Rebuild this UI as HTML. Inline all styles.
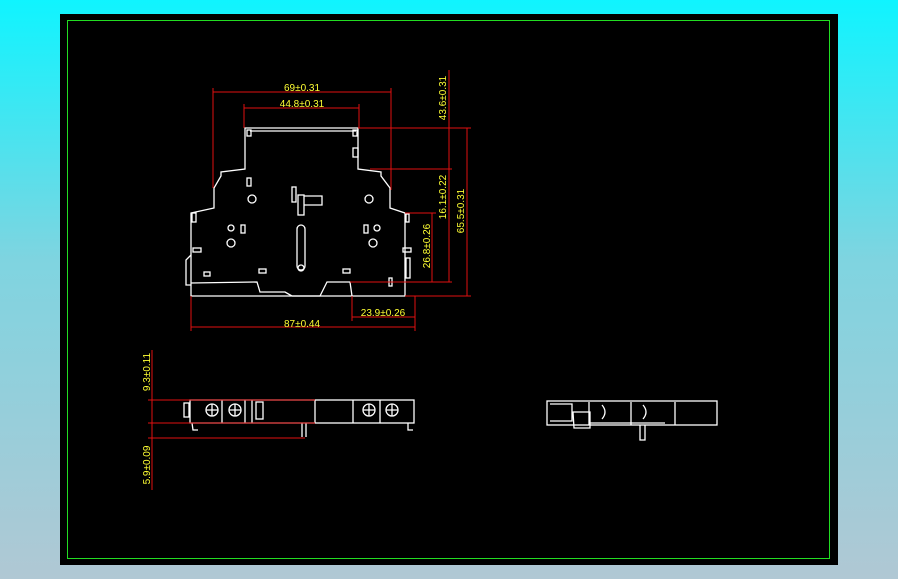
<!DOCTYPE html>
<html><head><style>
html,body{margin:0;padding:0;width:898px;height:579px;overflow:hidden;background:linear-gradient(#0ff4ff 0%,#7fd4e0 45%,#b0c8d4 100%);}
svg{position:absolute;left:0;top:0}
text{font-family:"Liberation Sans",sans-serif;font-size:10px;fill:#ffff33}
</style></head><body>
<svg width="898" height="579" viewBox="0 0 898 579">
<rect x="60" y="14" width="778" height="551" fill="#000"/>
<rect x="67.5" y="20.5" width="762" height="538" fill="none" stroke="#22dd22" stroke-width="1"/>
<g stroke="#fff" stroke-width="1.3" fill="none">
<path d="M191,296 L191,213 L214,208 L214,188 L221,176 L221,172 L245,169 L245,128 L358,128 L358,169 L381,172 L381,176 L390,188 L390,208 L405,213 L405,296 Z"/>
<path d="M191,283 L257,282 L260,292 L285,292 L292,296 M292,296 L320,296 L327,282 L350,282 L352,296"/>
<path d="M250,131 L356,131"/>
<rect x="247" y="130" width="4" height="6"/><rect x="353" y="130" width="4" height="6"/>
<rect x="353" y="148" width="5" height="9"/>
<rect x="247" y="178" width="4" height="8"/><rect x="292" y="187" width="4" height="15"/>
<circle cx="252" cy="199" r="4"/><circle cx="369" cy="199" r="4"/>
<rect x="298" y="195" width="6" height="20"/><path d="M304,196 L322,196 L322,205 L304,205"/>
<rect x="297" y="225" width="8" height="45" rx="4"/><circle cx="301" cy="268" r="3"/>
<circle cx="231" cy="228" r="3"/><rect x="241" y="225" width="4" height="8"/>
<circle cx="231" cy="243" r="4"/><rect x="364" y="225" width="4" height="8"/>
<circle cx="377" cy="228" r="3"/><circle cx="373" cy="243" r="4"/>
<rect x="192" y="213" width="4" height="9"/><rect x="193" y="248" width="8" height="4"/>
<rect x="204" y="272" width="6" height="4"/><rect x="259" y="269" width="7" height="4"/><rect x="343" y="269" width="7" height="4"/>
<rect x="406" y="214" width="3" height="8"/><rect x="403" y="248" width="8" height="4"/><rect x="406" y="258" width="4" height="20"/>
<rect x="389" y="278" width="3" height="8"/>
<path d="M191,255 L186,260 L186,285 L191,285"/>
<rect x="190" y="400" width="224" height="23"/>
<rect x="184" y="403" width="5" height="14"/><rect x="256" y="402" width="7" height="17"/>
<circle cx="212" cy="410" r="6"/><circle cx="235" cy="410" r="6"/><circle cx="369" cy="410" r="6"/><circle cx="392" cy="410" r="6"/>
<path d="M206,410h12M212,404v12M229,410h12M235,404v12M363,410h12M369,404v12M386,410h12M392,404v12"/>
<path d="M222,400v23M245,400v23M252,400v23M353,400v23M380,400v23M315,400v23"/>
<path d="M192,423 L193,430 L198,430 M302,423 L302,437 M306,423 L306,437 M408,423 L408,430 L413,430"/>
<rect x="547" y="401" width="170" height="24"/>
<path d="M550,404 L572,404 L572,421 L550,421 M573,412 L590,412 L590,428 L574,428 Z M589,402 L589,425 M631,402 L631,425 M675,402 L675,425 M589,423 L665,423 M640,425 L640,440 L645,440 L645,425"/>
<path d="M602,405 Q608,412 602,419 M643,405 Q649,412 643,419"/>
</g>
<g stroke="#e01010" stroke-width="1" fill="none">
<path d="M213,88 L213,188 M391,88 L391,190 M213,92 L391,92 M244,104 L244,128 M359,104 L359,128 M244,108 L359,108"/>
<path d="M191,296 L191,331 M415,296 L415,331 M191,327 L415,327 M352,296 L352,321 M352,317 L415,317"/>
<path d="M358,128 L471,128 M370,169 L452,169 M350,282 L452,282 M405,296 L471,296 M405,213 L436,213"/>
<path d="M432,213 L432,282 M449,70 L449,282 M467,128 L467,296"/>
<path d="M152,350 L152,490 M148,400 L315,400 M148,423 L315,423 M148,438 L305,438"/>
</g>
<text x="302" y="91" text-anchor="middle">69±0.31</text>
<text x="302" y="107" text-anchor="middle">44.8±0.31</text>
<text x="302" y="327" text-anchor="middle">87±0.44</text>
<text x="383" y="316" text-anchor="middle">23.9±0.26</text>
<text transform="translate(446,98) rotate(-90)" text-anchor="middle">43.6±0.31</text>
<text transform="translate(446,197) rotate(-90)" text-anchor="middle">16.1±0.22</text>
<text transform="translate(430,246) rotate(-90)" text-anchor="middle">26.8±0.26</text>
<text transform="translate(464,211) rotate(-90)" text-anchor="middle">65.5±0.31</text>
<text transform="translate(150,372) rotate(-90)" text-anchor="middle">9.3±0.11</text>
<text transform="translate(150,465) rotate(-90)" text-anchor="middle">5.9±0.09</text>
</svg>
</body></html>
